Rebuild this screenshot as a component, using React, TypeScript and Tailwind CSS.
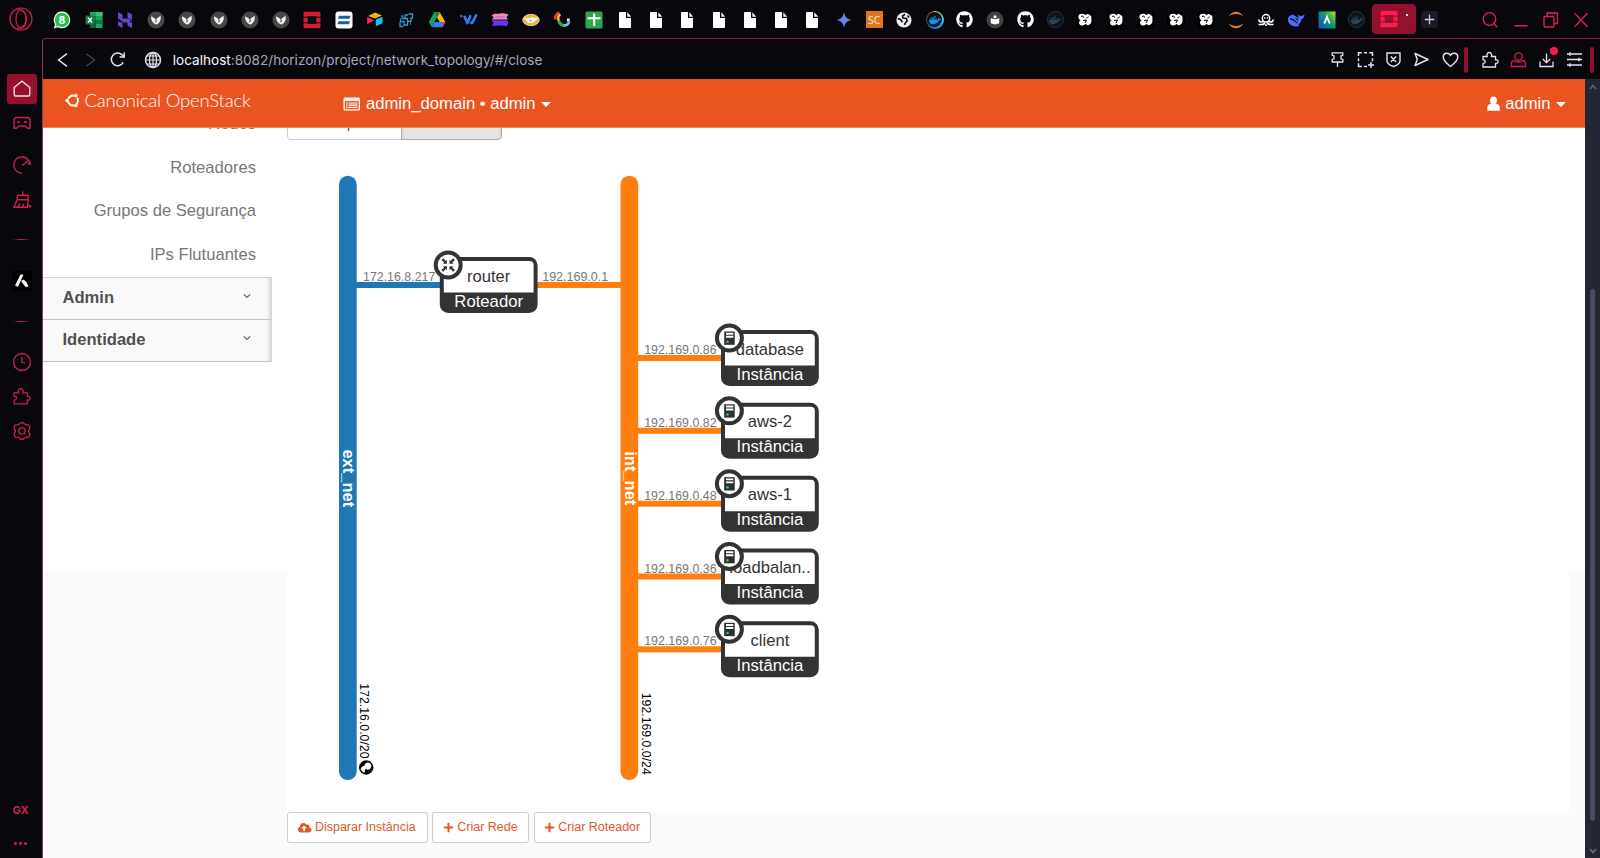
import type { ReactNode } from "react";
import { FaDocker, FaGithub, FaCloudUploadAlt, FaPlus } from "react-icons/fa";

const ARIAL = "font-['Liberation_Sans',Arial,sans-serif]";

function Svg({ size = 18, box = 18, children, className = "" }: { size?: number; box?: number; children: ReactNode; className?: string }) {
  return (
    <svg width={size} height={size} viewBox={`0 0 ${box} ${box}`} fill="none" className={`shrink-0 ${className}`}>
      {children}
    </svg>
  );
}

/* ---------- tab favicons ---------- */

const WhatsApp = () => (
  <Svg>
    <path d="M9 .6a8.3 8.3 0 1 1-3.9 15.700L.8 17.400 2 13.300A8.300 8.300 0 0 1 9 .6Z" fill="#fff" />
    <circle cx="9" cy="8.900" r="7.200" fill="#1fc34e" />
    <path d="m2.300 15.900.9-3 2 2Z" fill="#1fc34e" />
    <text x="9" y="12.800" textAnchor="middle" fontSize="10.500" fontWeight="700" fill="#fff" fontFamily="Inter, sans-serif">8</text>
  </Svg>
);
const Excel = () => (
  <Svg>
    <rect x="5" y="1" width="12.500" height="16" rx="1" fill="#21a366" />
    <path d="M5 5h6v4H5Z" fill="#107c41" />
    <path d="M11 9h6.500v4H11Z" fill="#107c41" />
    <path d="M5 9h6v8H6a1 1 0 0 1-1-1Z" fill="#185c37" />
    <path d="M11 1h5.500a1 1 0 0 1 1 1v3H11Z" fill="#33c481" />
    <rect x=".5" y="4.500" width="9" height="9" rx="1" fill="#107c41" />
    <path d="m3 6.800 4 4.600M7 6.800l-4 4.600" stroke="#fff" strokeWidth="1.500" />
  </Svg>
);
const Hostinger = () => (
  <Svg>
    <path d="M2 1l4.500 2.500v4H13l3 2.500H6L2 7.600ZM11.500 1 16 3.500v5.200L11.500 6.600ZM2 10.200 6.500 12v5L2 14.500ZM5 9.400h7l4 2.600v5l-4.500-2.500v-3H7Z" fill="#6747c7" />
  </Svg>
);
const Wolf = () => (
  <Svg>
    <circle cx="9" cy="9" r="8.500" fill="#484848" />
    <path d="M4 5.500c1.500.3 3 1.200 4.500 3L13.500 4.800c.8 3 0 6.200-3.500 8.700C6.400 13 4 9.800 4 5.500Z" fill="#f1f1f1" />
    <path d="m8 6 .8 3.500-1.300 2.200 2.500-1.500-1-3Z" fill="#484848" />
  </Svg>
);
const OpenStack = ({ color = "#da1a32" }: { color?: string }) => (
  <Svg>
    <path d="M.5 5.800V2.500a1.700 1.700 0 0 1 1.700-1.700h13.600a1.700 1.700 0 0 1 1.700 1.700v3.300h-4.200V5H4.700v.8ZM.5 12.200v3.300a1.700 1.700 0 0 0 1.700 1.700h13.600a1.700 1.700 0 0 0 1.700-1.700v-3.300h-4.200v.8H4.700v-.8ZM.5 6.800h4.200v4.400H.5ZM13.300 6.800h4.200v4.400h-4.200Z" fill={color} />
  </Svg>
);
const Lines = () => (
  <Svg>
    <rect x=".5" y=".5" width="17" height="17" rx="3" fill="#fff" />
    <path d="M4 4.700h11.500l-1 3H3ZM3.500 10.300H15l-1 3H2.500Z" fill="#1560a8" />
  </Svg>
);
const Airtable = () => (
  <Svg>
    <path d="m2 5 6.700-3.200a1 1 0 0 1 .8 0L16 4.600 9.300 7.500Z" fill="#fcb400" />
    <path d="m9.800 8.600 6.700-2.900v6.500l-6.700 3Z" fill="#18bfff" />
    <path d="M1.200 6 8 9.200l-6.800 4Z" fill="#f82b60" />
  </Svg>
);
const Circuit = () => (
  <Svg>
    <path d="M5 7.500h3V4h3M8 7.500h2.500v3H14V7h1.500V3h-4M10.500 10.500v3.500H7v-3.500H3.500v-3M3 11v4.500h3.500M14 13h-1M5 7.500V5h1.500" stroke="#3198cc" strokeWidth="1.300" />
  </Svg>
);
const Drive = () => (
  <Svg>
    <path d="M6 1.500h5.800L6.500 10.800 3.700 16 .8 11Z" fill="#11a35a" />
    <path d="M6.100 1.500h5.800L17.300 11h-5.700Z" fill="#fbbc05" />
    <path d="M6.300 11h11l-2.800 5.200H3.700Z" fill="#3b7ded" />
    <path d="m14 11 3.300 0-2.800 5.200Z" fill="#ea4335" />
    <path d="m6.100 1.500 3 5.200 2.800-5.200Z" fill="#0b8043" />
  </Svg>
);
const Workspace = () => (
  <Svg>
    <path d="m4.600 5.800 2.800 6.200 2.800-6.800M11 11.800l1.200.2 3.800-7.500" stroke="#2f7bf0" strokeWidth="2.700" strokeLinecap="round" strokeLinejoin="round" />
    <circle cx="1.200" cy="5" r="1.300" fill="#2f7bf0" />
  </Svg>
);
const Clouds = () => (
  <Svg>
    <path d="M.5 5C3 1.500 6 3.300 9 2.500s5 0 8.500 1l-2 2.700 1.500 2.300H1L3 6Z" fill="#f08cc0" />
    <path d="M.5 9.300h15l2 2-1.500 3.700-7-.5-8 .5L2.500 12Z" fill="#6a35f2" />
    <path d="M4 6h10" stroke="#b54da0" strokeWidth=".8" />
  </Svg>
);
const Handshake = () => (
  <Svg>
    <ellipse cx="9" cy="9" rx="8.300" ry="5.700" fill="#e3ba3b" stroke="#f3e3a5" strokeWidth=".8" />
    <path d="m2 7 5 .5 3-1 6 .5-2 2.500-4 2.500-4-.6Z" fill="#fff" />
    <path d="m7 9 3 1.200" stroke="#7a6a4a" strokeWidth=".8" />
  </Svg>
);
const Multi = () => (
  <Svg>
    <path d="M6.500 2C3 2.500 1.800 5.500 2.500 8.500" stroke="#e8384f" strokeWidth="2.800" />
    <path d="M7.500 3.500C5 4.500 4.500 7.500 6 10" stroke="#fcbf2d" strokeWidth="2.500" />
    <path d="M5.500 10c1.500 3 3.500 4.800 6.500 4.500" stroke="#37a862" strokeWidth="3" />
    <path d="M11 14.500c2.500 0 4.800-1.500 5-4" stroke="#61c9e8" strokeWidth="2.800" />
    <path d="M15.300 7.500v3" stroke="#d9edf5" strokeWidth="2.800" />
  </Svg>
);
const Sheets = () => (
  <Svg>
    <rect x=".5" y=".5" width="17" height="17" rx="1.500" fill="#2fa750" />
    <path d="M9.200 2.500v12.500M2.500 7.200h13" stroke="#fff" strokeWidth="2" />
  </Svg>
);
const FileTab = () => (
  <Svg>
    <path d="M4 1h6v6h5V16a1 1 0 0 1-1 1H4a1 1 0 0 1-1-1V2a1 1 0 0 1 1-1Z" fill="#fff" />
    <path d="m11.300 1.300 3.900 4.400h-3.900Z" fill="#fff" />
  </Svg>
);
const Gemini = () => (
  <Svg>
    <defs>
      <linearGradient id="gem" x1="2" y1="14" x2="15" y2="3" gradientUnits="userSpaceOnUse">
        <stop stopColor="#3d8bee" />
        <stop offset="1" stopColor="#8a7bd8" />
      </linearGradient>
    </defs>
    <path d="M9 1c.8 5 3 7.300 7.800 8C12 9.800 9.800 12 9 17 8.200 12 6 9.800 1.200 9 6 8.300 8.200 6 9 1Z" fill="url(#gem)" />
  </Svg>
);
const Sc = () => (
  <div className="flex h-[17px] w-[17px] items-center justify-center bg-[#e0761c] font-['Noto_Sans',sans-serif] text-[10.500px] leading-none text-[#fbe9d8]">SC</div>
);
const GlobeTab = () => (
  <Svg>
    <circle cx="9" cy="9" r="7.600" fill="#eceef1" />
    <path d="M10 3.300 7.500 5l.5 2 3.500.5.500 2.500-2 2.500-.5 1.500M2.800 7.500l2.700 1 2 2.700M12.500 4.500l1.500 2" stroke="#15161c" strokeWidth="1.700" />
  </Svg>
);
const DockerRing = () => (
  <span className="flex h-[18px] w-[18px] items-center justify-center rounded-full bg-[conic-gradient(#f4b740,#2ac3de_25%,#2480d8_55%,#223a7a_70%,#e0405a_85%,#f4b740)] p-[1.500px]">
    <span className="flex h-full w-full items-center justify-center rounded-full bg-[#0a1420] text-[#1592e6]">
      <FaDocker size={12} />
    </span>
  </span>
);
const DockerDim = () => (
  <span className="flex h-[17px] w-[17px] items-center justify-center rounded-full border border-[#263743] bg-[#0c151c] text-[#2c4656]">
    <FaDocker size={12} />
  </span>
);
const Github = () => <FaGithub size={17} color="#fff" />;
const Reader = () => (
  <Svg>
    <circle cx="9" cy="9" r="8.500" fill="#424242" />
    <circle cx="9" cy="5.700" r="1.500" fill="#fff" />
    <path d="m4.800 7.200 4.200 1 4.200-1v5L9 13.500l-4.200-1.300Z" fill="#fff" />
  </Svg>
);
const Knot = () => (
  <Svg>
    <rect width="18" height="18" rx="4" fill="#000" />
    <path d="M3 3.800c2.500-1.600 5.500-1 6.200.5C11 2.500 13 2.500 13.300 4c2 .3 2.700 2.500 2 4 .8 3-.8 6-3.600 6.200L9.500 13c-1.500 2-5.500 2-6.300-.6-.5-1.700.3-2.600 1.600-2.900C2.500 8.500 1.800 5.800 3 3.800Z" fill="#fff" />
    <path d="M5 5.500c1.500-.8 2.800-.3 2.500 1M10.500 7c1 0 1.600-.5 1.800-1.500M7 9.500l3.500-.5-1.500 3" stroke="#000" strokeWidth="1" />
  </Svg>
);
const Jupyter = () => (
  <Svg>
    <path d="M1.500 5.500C5-.8 13-.8 16.500 5.500 12 2.300 6 2.300 1.500 5.500ZM1.500 12.500c3.500 6.300 11.500 6.300 15 0-4.500 3.200-10.500 3.200-15 0Z" fill="#e67a22" />
  </Svg>
);
const Octo = () => (
  <Svg>
    <circle cx="9" cy="7.300" r="3.700" stroke="#fff" strokeWidth="1.500" />
    <path d="M7 7h1.300M9.700 7H11" stroke="#fff" strokeWidth="1.400" />
    <path d="M2.200 8.500c-.8 2.500 2.300 2.800 4.300 2M15.800 8.500c.8 2.500-2.300 2.800-4.300 2M1.500 13.500h3c2 0 3-.8 3.300-2M16.500 13.500h-3c-2 0-3-.8-3.300-2M8 14h2" stroke="#fff" strokeWidth="1.700" />
  </Svg>
);
const Deepseek = () => (
  <Svg>
    <path d="M.8 8C1.500 4.500 4.500 3.500 6.500 3.800l5 3.500c0-1.500-.8-2.500 0-4 .5 1.500 2 2.200 3.200 1.800L17.500 3.500c-.3 3-1.300 4.200-3 4.800-.3 2.500-1.500 4-3 5.200l1 1.300C7 16.500.8 14.500.8 8Z" fill="#4d6bfe" />
    <path d="M3 8c3-.8 5.500 3 7.500 4.200M8.500 7.500c1.500.2 2.200 1 2.300 2" stroke="#08070c" strokeWidth="1.200" />
  </Svg>
);
const Auth = () => (
  <Svg>
    <defs>
      <linearGradient id="auth" x1="0" y1="16" x2="18" y2="1" gradientUnits="userSpaceOnUse">
        <stop stopColor="#114fc4" />
        <stop offset=".55" stopColor="#0e9a74" />
        <stop offset="1" stopColor="#c3e61c" />
      </linearGradient>
    </defs>
    <rect x=".5" y=".5" width="17" height="17" fill="url(#auth)" />
    <path d="M6.300 12.500 9 5.800l2.700 6.700" stroke="#fff" strokeWidth="1.900" />
  </Svg>
);

const tabsA = [WhatsApp, Excel, Hostinger, Wolf, Wolf, Wolf, Wolf, Wolf, OpenStack, Lines, Airtable, Circuit, Drive, Workspace, Clouds, Handshake, Multi, Sheets, FileTab, FileTab, FileTab, FileTab, FileTab, FileTab, FileTab, Gemini];
const tabsB = [Sc, GlobeTab, DockerRing, Github, Reader, Github, DockerDim, Knot, Knot, Knot, Knot, Knot, Jupyter, Octo, Deepseek, Auth, DockerDim];

function TabStrip() {
  return (
    <div className="flex h-[38px] items-center pl-[4.700px] pt-[1.500px]">
      {tabsA.map((Icon, i) => (
        <div key={i} className="flex w-[31.260px] shrink-0 justify-center"><Icon /></div>
      ))}
      {tabsB.map((Icon, i) => (
        <div key={i} className="flex w-[30.170px] shrink-0 justify-center"><Icon /></div>
      ))}
      <div className="-mt-px flex h-[30px] w-[44.500px] shrink-0 items-center rounded-[4px] bg-[#93112f] pl-[8px]">
        <OpenStack color="#fa1e4e" />
        <span className="-mt-[9px] ml-[8.500px] h-[1.500px] w-[1.500px] bg-[#f3d7de]" />
      </div>
      <div className="ml-[5px] flex h-[17px] w-[17px] shrink-0 items-center justify-center rounded-[3px] bg-[#1c1a28]">
        <Svg size={11} box={11}><path d="M5.500.800v9.400M.800 5.500h9.400" stroke="#cfcbe0" strokeWidth="1.300" /></Svg>
      </div>
      <div className="ml-[36px] flex items-center text-[#e0234e]">
        <div className="flex w-[31px] justify-center">
          <Svg><circle cx="8.500" cy="8" r="6.300" stroke="currentColor" strokeWidth="1.300" /><path d="m13 12.600 3.300 3.600" stroke="currentColor" strokeWidth="1.300" /></Svg>
        </div>
        <div className="flex w-[31px] justify-center">
          <Svg><path d="M2.500 14.800h13" stroke="currentColor" strokeWidth="1.500" /></Svg>
        </div>
        <div className="flex w-[30px] justify-center">
          <Svg><rect x="2" y="5.500" width="10" height="10.500" rx="1" stroke="currentColor" strokeWidth="1.300" /><path d="M5.200 5.500V2h10.300v10.500H12" stroke="currentColor" strokeWidth="1.300" /></Svg>
        </div>
        <div className="flex w-[30px] justify-center">
          <Svg><path d="m2.500 2.200 13 13.500M15.500 2.200l-13 13.500" stroke="currentColor" strokeWidth="1.300" /></Svg>
        </div>
      </div>
    </div>
  );
}

/* ---------- address bar ---------- */

const puzzlePath = "M2 5.500h4.200C5.300 3 6.800 1.500 8.300 1.500S11.300 3 10.500 5.500h4v3.300c3.500-.6 3.500 4.200 0 3.700v3.500H2v-3.300c3-.8 3-3.600 0-4Z";

function AddressBar() {
  const cell = "flex w-[28.200px] shrink-0 justify-center";
  return (
    <div className="flex h-[40px] items-center pt-[1.500px] text-[#e4e2ec]">
      <div className="ml-[12px] flex w-[16px] justify-center"><Svg size={16} box={16}><path d="M12 1.700 3.600 8l8.400 6.300" stroke="currentColor" strokeWidth="1.500" /></Svg></div>
      <div className="ml-[11px] flex w-[16px] justify-center text-[#45434f]"><Svg size={16} box={16}><path d="M4.200 1.700 12.600 8l-8.400 6.300" stroke="currentColor" strokeWidth="1.300" /></Svg></div>
      <div className="ml-[10.500px] flex w-[18px] justify-center">
        <Svg size={17} box={17}><path d="M14.200 11.300A6.300 6.300 0 1 1 13 3.800l2 2M15.200 1.500v4.400h-4.600" stroke="currentColor" strokeWidth="1.500" /></Svg>
      </div>
      <div className="ml-[17.300px] flex w-[18px] justify-center">
        <Svg size={18}><circle cx="9" cy="9" r="7.500" stroke="currentColor" strokeWidth="1.500" /><ellipse cx="9" cy="9" rx="3.500" ry="7.500" stroke="currentColor" strokeWidth="1.300" /><path d="M1.500 9h15M2.800 5h12.400M2.800 13h12.400M9 1.500v15" stroke="currentColor" strokeWidth="1.200" /></Svg>
      </div>
      <div className="ml-[11px] mt-px grow whitespace-nowrap font-['Inter',sans-serif] text-[13.570px] text-[#aaa5b8]">
        <span className="text-[#fbfaff]">localhost</span>:8082/horizon/project/network_topology/#/close
      </div>
      <div className={cell}><Svg size={17} box={17}><path d="M3.200 1.800h10.600v2.500l-1.800.5v3l1.800.700v2.500H3.200V8.500L5 7.800v-3l-1.800-.5ZM8.500 11v5" stroke="currentColor" strokeWidth="1.300" /></Svg></div>
      <div className={cell}><Svg size={17} box={17}><path d="M1.500 5V1.700h3.300M7 1.700h3M12.200 1.700h3.300V5M15.500 7.200v3M1.500 7.200v3M1.500 12.200v3.300h3.300M7 15.500h3M11 14h6M14 11v6" stroke="currentColor" strokeWidth="1.500" /></Svg></div>
      <div className={cell}><Svg size={17} box={17}><path d="M2 2h13v8.500c-1 2.500-3.500 4-6.500 5-3-1-5.500-2.500-6.500-5ZM5.800 5.500l5.400 5.400M11.200 5.500l-5.400 5.400" stroke="currentColor" strokeWidth="1.400" /></Svg></div>
      <div className={cell}><Svg size={17} box={17}><path d="m2 2.500 13 6-13 6 2.300-6Z" stroke="currentColor" strokeWidth="1.400" strokeLinejoin="round" /></Svg></div>
      <div className={cell}><Svg size={17} box={17}><path d="M8.500 15.500C4 12 1.200 9.500 1.200 6c0-4.300 5.300-5 7.300-1.700C10.500 1 15.800 1.700 15.800 6c0 3.500-2.800 6-7.300 9.500Z" stroke="currentColor" strokeWidth="1.400" /></Svg></div>
      <div className="h-[26px] w-[4px] shrink-0 rounded-sm bg-[#8f1130]" />
      <div className={`${cell} ml-[8px]`}><Svg size={18}><path d={puzzlePath} stroke="currentColor" strokeWidth="1.300" /></Svg></div>
      <div className={`${cell} text-[#d71f49]`}><Svg size={17} box={17}><circle cx="8.500" cy="5.500" r="3.700" stroke="currentColor" strokeWidth="1.300" /><path d="M5 9.700H3.300L1.500 11.500v4h14v-4l-1.800-1.800H12q-3.500 2.600-7 0" stroke="currentColor" strokeWidth="1.300" /></Svg></div>
      <div className={`${cell} relative`}>
        <Svg size={17} box={17}><path d="M8.500 2.500v9M4.800 8l3.700 3.700L12.200 8M2 10.500v5h13v-5" stroke="currentColor" strokeWidth="1.300" /></Svg>
        <span className="absolute -top-[4px] right-[2.500px] h-[8px] w-[8px] rounded-full bg-[#fa1e4e]" />
      </div>
      <div className={cell}><Svg size={17} box={17}><path d="M1 3h15M1 8.500h15M1 14h15M4 1.200v3.600M13 6.700v3.600M4 12.200v3.600" stroke="currentColor" strokeWidth="1.400" /></Svg></div>
      <div className="ml-[1px] h-[26px] w-[4px] shrink-0 rounded-sm bg-[#8f1130]" />
      <div className="w-[6px] shrink-0" />
    </div>
  );
}

/* ---------- browser side rail ---------- */

function Rail() {
  const cell = "flex shrink-0 items-center justify-center";
  return (
    <aside className="flex w-[42px] shrink-0 flex-col pl-px text-[#cf2149]">
      <div className={`${cell} h-[38px] pr-px`}>
        <Svg size={24} box={24}><circle cx="12" cy="12" r="11" stroke="currentColor" strokeWidth="1.200" /><ellipse cx="12" cy="12" rx="5" ry="9.500" stroke="currentColor" strokeWidth="1.200" /><path d="M8 2.500c7.500 1 9.500 5 9.500 9.500s-2 8.500-9.500 9.500" stroke="currentColor" strokeWidth="1.200" /></Svg>
      </div>
      <div className="mx-auto mt-[35.500px] flex h-[30px] w-[30px] shrink-0 items-center justify-center rounded-[3px] bg-[#93112f] text-[#fbd9e1]">
        <Svg size={20} box={20}><path d="M2.200 8.500 10 2.200l7.800 6.300v7a1.500 1.500 0 0 1-1.500 1.500H3.700a1.500 1.500 0 0 1-1.500-1.500Z" stroke="currentColor" strokeWidth="1.400" /></Svg>
      </div>
      <div className={`${cell} h-[38px]`}>
        <Svg size={20} box={20}><path d="M4 4.500h12l2 2v8.800h-2.500l-2.500-2.300H7l-2.500 2.300H2V6.500Z" stroke="currentColor" strokeWidth="1.400" strokeLinejoin="round" /><circle cx="6.500" cy="9" r="1.300" fill="currentColor" /><circle cx="13.500" cy="9" r="1.300" fill="currentColor" /></Svg>
      </div>
      <div className={`${cell} h-[47px]`}>
        <Svg size={20} box={20}><path d="M10 18.300a8.300 8.300 0 1 1 8.300-8M10 10.500 16 5.800M15.500 8.500h2.500" stroke="currentColor" strokeWidth="1.400" /></Svg>
      </div>
      <div className={`${cell} h-[23px]`}>
        <Svg size={20} box={20}><path d="M10.800 1.500v4M5.500 5.300h10.700v4.500H5ZM5 9.800l-3 7.500h13.500l.700-7.500M5.800 17.200l2-3.500M10.500 17.200l1-3.500" stroke="currentColor" strokeWidth="1.400" /><circle cx="18" cy="16.300" r="1.300" fill="currentColor" /></Svg>
      </div>
      <div className={`${cell} h-[55px]`}><span className="h-px w-[19px] bg-gradient-to-r from-transparent via-[#cf2149] to-transparent" /></div>
      <div className={`${cell} h-[29px]`}>
        <Svg size={20} box={20}><rect width="20" height="20" rx="3" fill="#000" /><path d="M8.500 3.500h3L6 16l-3-1.500ZM9 10l2.500-1.500 3 2.500 2 4.500-3 .5Z" fill="#f2f2f2" /></Svg>
      </div>
      <div className={`${cell} h-[51px]`}><span className="h-px w-[19px] bg-gradient-to-r from-transparent via-[#cf2149] to-transparent" /></div>
      <div className={`${cell} h-[30px]`}>
        <Svg size={20} box={20}><circle cx="10" cy="10" r="8.500" stroke="currentColor" strokeWidth="1.300" /><path d="M9.800 5v5.300l3.200.5" stroke="currentColor" strokeWidth="1.300" /></Svg>
      </div>
      <div className={`${cell} h-[39px]`}><Svg size={19}><path d={puzzlePath} stroke="currentColor" strokeWidth="1.200" /></Svg></div>
      <div className={`${cell} h-[30px]`}>
        <Svg size={20} box={20}><path d="M7.700 2.800Q10 .2 12.300 2.800L14 3.600q3.900-.2 3.800 3.300L16.500 10l1.300 3.100q.1 3.500-3.800 3.300l-1.700.8q-2.300 2.600-4.600 0L6 16.400q-3.900.2-3.800-3.300L3.500 10 2.200 6.900Q2.100 3.400 6 3.600Z" stroke="currentColor" strokeWidth="1.300" /><circle cx="10" cy="10" r="3.200" stroke="currentColor" strokeWidth="1.300" /></Svg>
      </div>
      <div className="mt-auto flex h-[20px] shrink-0 items-center justify-center pr-[2px] font-['Inter',sans-serif] text-[11px] font-bold">GX</div>
      <div className="mb-px mt-[9px] flex h-[28px] shrink-0 items-center justify-center gap-[2.300px] pr-[2px]">
        <span className="h-[3px] w-[3px] rounded-full bg-current" />
        <span className="h-[3px] w-[3px] rounded-full bg-current" />
        <span className="h-[3px] w-[3px] rounded-full bg-current" />
      </div>
    </aside>
  );
}

/* ---------- Horizon dashboard ---------- */

const Caret = () => <span className="mt-px h-0 w-0 border-x-[5px] border-t-[5.500px] border-x-transparent border-t-white" />;

function Header() {
  return (
    <header className="relative z-10 flex h-[48.500px] shrink-0 items-center border-b border-[#f0845c] bg-[#e95420] text-[16.650px] text-white">
      <div className="ml-[22px] mb-[5px] flex w-[278.500px] items-center">
        <Svg size={15} box={16}>
          <circle cx="8.500" cy="8" r="5.300" stroke="#fff" strokeWidth="2" strokeDasharray="8.100 3" strokeDashoffset="-1.500" transform="rotate(60 8.500 8)" />
          <circle cx="2.300" cy="8" r="1.900" fill="#fff" />
          <circle cx="11.600" cy="2.600" r="1.900" fill="#fff" />
          <circle cx="11.600" cy="13.400" r="1.900" fill="#fff" />
        </Svg>
        <span className="ml-[5px] whitespace-nowrap font-['Lato',sans-serif] text-[18.500px] font-light leading-none tracking-[-0.180px]">Canonical OpenStack</span>
      </div>
      <div className="flex items-center pt-[2.500px]">
        <Svg size={18}>
          <path fillRule="evenodd" d="M2 2.500h13.500a1.500 1.500 0 0 1 1.500 1.500v10a1.500 1.500 0 0 1-1.500 1.500H2A1.500 1.500 0 0 1 .500 14V4A1.500 1.500 0 0 1 2 2.500ZM1.800 6v8.200h13.900V6Z" fill="#fff" />
          <path d="M3 8h1.500M5.500 8h9M3 10.200h1.500M5.500 10.200h9M3 12.400h1.500M5.500 12.400h9" stroke="#fff" strokeWidth="1.200" />
        </Svg>
        <span className="ml-[5px] mr-[5px] whitespace-nowrap">admin_domain • admin</span>
        <Caret />
      </div>
      <div className="ml-auto mr-[19.500px] flex items-center pt-[2.500px]">
        <Svg size={15} box={15}>
          <ellipse cx="7.500" cy="4.500" rx="3.400" ry="4" fill="#fff" />
          <path d="M1.300 14.800v-3.500c0-2 1.700-3.300 3.700-3.500h5c2 .2 3.700 1.500 3.700 3.500v3.500Z" fill="#fff" />
        </Svg>
        <span className="ml-[4px] mr-[5px]">admin</span>
        <Caret />
      </div>
    </header>
  );
}

function Panel({ label }: { label: string }) {
  return (
    <div className="flex h-[42px] items-center justify-between border-b border-[#c6c6c6] bg-[#f9f9f9] pl-[20px] pr-[19.500px] font-bold text-[#515151] shadow-[inset_-4px_0_4px_-3px_rgba(0,0,0,0.200)]">
      {label}
      <Svg size={8} box={8} className="mb-[4px]"><path d="M.8 2.300 4 5.500l3.200-3.200" stroke="#666" strokeWidth="1.200" /></Svg>
    </div>
  );
}

function SideNav() {
  return (
    <nav className="w-[229px] shrink-0 text-[16.600px]">
      <div className="-mt-[25px] pr-[15.500px] text-right text-[#777]">
        {["Redes", "Roteadores", "Grupos de Segurança", "IPs Flutuantes"].map((item) => (
          <div key={item} className="flex h-[43.500px] items-center justify-end pt-px">{item}</div>
        ))}
      </div>
      <div className="border-r border-t border-r-[#d8d8d8] border-t-[#d2d2d2]">
        <Panel label="Admin" />
        <Panel label="Identidade" />
      </div>
    </nav>
  );
}

const instances = [
  { name: "database", ip: "192.169.0.86", y: 355 },
  { name: "aws-2", ip: "192.169.0.82", y: 427.8 },
  { name: "aws-1", ip: "192.169.0.48", y: 500.7 },
  { name: "loadbalan..", ip: "192.169.0.36", y: 573.5 },
  { name: "client", ip: "192.169.0.76", y: 646.3 },
];

/* Device card; the origin is the top-left corner of its box. */
function Device({ x, y, name, kind, children }: { x: number; y: number; name: string; kind: string; children: ReactNode }) {
  return (
    <g transform={`translate(${x} ${y})`}>
      <rect width="97.800" height="56" rx="8.500" fill="#333" />
      <path d="M4 35.500V8a4 4 0 0 1 4-4h81.800a4 4 0 0 1 4 4v27.500Z" fill="#fff" />
      <text x="48.900" y="24.600" textAnchor="middle" fontSize="16.600" fill="#333">{name}</text>
      <text x="48.900" y="49.600" textAnchor="middle" fontSize="16.700" fill="#fff">{kind}</text>
      <circle cx="8.400" cy="8" r="12.500" fill="#fff" stroke="#333" strokeWidth="4" />
      {children}
    </g>
  );
}

function Topology() {
  return (
    <svg width="1282" height="655" viewBox="287 157 1282 655" className="block font-['Liberation_Sans',Arial,sans-serif]">
      <rect x="339" y="175.700" width="17.700" height="604.300" rx="8.850" fill="#1f77b4" />
      <rect x="620.500" y="175.700" width="17.700" height="604.300" rx="8.850" fill="#ff7f0e" />
      <text transform="translate(343.300 478.300) rotate(90)" textAnchor="middle" fontSize="16.500" fontWeight="700" fill="#fff">ext_net</text>
      <text transform="translate(624.800 478.300) rotate(90)" textAnchor="middle" fontSize="16.500" fontWeight="700" fill="#fff">int_net</text>
      <text transform="translate(360.300 758.500) rotate(90)" textAnchor="end" fontSize="12.300" fill="#000">172.16.0.0/20</text>
      <text transform="translate(642 774.800) rotate(90)" textAnchor="end" fontSize="12.300" fill="#000">192.169.0.0/24</text>
      <circle cx="366.200" cy="767.500" r="7.200" fill="#000" />
      <path d="m360.500 769 1.800-2.500 2.200-.8.300-1.800 2.500-1.500 2.800.6 1.400 2.500-.7 2.500-1.500 1.500-2.300.2-1-1.200-1.500 2.500 1 1.500-2.500-.3Z" fill="#fff" />

      <rect x="356" y="282" width="86" height="6" fill="#1f77b4" />
      <rect x="535" y="282" width="87" height="6" fill="#ff7f0e" />
      <text x="363" y="281" fontSize="12.400" fill="#777">172.16.8.217</text>
      <text x="542.200" y="281" fontSize="12.500" fill="#777">192.169.0.1</text>
      <Device x={439.8} y={257} name="router" kind="Roteador">
        <g transform="translate(8.400 8)" fill="#333">
          {[0, 90, 180, 270].map((a) => (
            <path key={a} transform={`rotate(${a})`} d="M1.300-1.300V-5.300L2.500-4.100 5-6.800 6.800-5 4.100-2.500 5.300-1.300Z" />
          ))}
        </g>
      </Device>

      {instances.map((d) => (
        <g key={d.name}>
          <rect x="637" y={d.y} width="86" height="6" fill="#ff7f0e" />
          <text x="644.200" y={d.y - 1} fontSize="12.400" fill="#777">{d.ip}</text>
          <Device x={721} y={d.y - 25} name={d.name} kind="Instância">
            <rect x="3.200" y="1.500" width="10.500" height="13.300" fill="#2b2f2d" />
            <path d="M5 3.700h7.300M5 6.700h7.300" stroke="#fff" strokeWidth="1.900" />
            <circle cx="6.500" cy="11.700" r="1.300" fill="#4cba6a" />
          </Device>
        </g>
      ))}
    </svg>
  );
}

function ActionButton({ icon, label, width }: { icon: ReactNode; label: string; width: string }) {
  return (
    <button className={`flex h-[30.500px] items-center justify-center gap-[3px] whitespace-nowrap rounded-[3px] border border-[#ccc] bg-white text-[12.500px] text-[#dd5a2c] ${width}`}>
      {icon}
      {label}
    </button>
  );
}

function Content() {
  return (
    <main className="ml-[15px] w-[1282px] shrink-0">
      <div className="-mt-[18px] flex h-[30.500px] text-[12.400px] text-[#333]">
        <div className="flex w-[115.500px] items-center justify-center rounded-l-[4px] border border-[#ccc] bg-white pl-[17px]">Pequeno</div>
        <div className="-ml-px flex w-[101px] items-center justify-center rounded-r-[4px] border border-[#adadad] bg-[#e6e6e6] shadow-[inset_0_3px_5px_rgba(0,0,0,0.125)]">Normal</div>
      </div>
      <div className="mt-[17.300px] bg-white"><Topology /></div>
      <div className="mt-[0.200px] flex gap-[4.500px]">
        <ActionButton icon={<FaCloudUploadAlt size={13.5} />} label="Disparar Instância" width="w-[141px]" />
        <ActionButton icon={<FaPlus size={11} />} label="Criar Rede" width="w-[97px]" />
        <ActionButton icon={<FaPlus size={11} />} label="Criar Roteador" width="w-[117.500px]" />
      </div>
    </main>
  );
}

function ScrollBar() {
  return (
    <div className="flex w-[15px] shrink-0 flex-col items-center bg-[#232733]">
      <Svg size={8} box={8} className="mt-[4px]"><path d="m1 6 3-3.500L7 6" stroke="#5b5f6b" strokeWidth="1.700" /></Svg>
      <span className="mt-[198px] h-[532px] w-[5px] rounded-full bg-[#474c61]" />
      <Svg size={8} box={8} className="mb-[3px] mt-auto"><path d="m1 2 3 3.500L7 2" stroke="#6b6f7b" strokeWidth="1.700" /></Svg>
    </div>
  );
}

export default function App() {
  return (
    <div className={`flex h-[858px] w-[1600px] overflow-hidden bg-[#08070c] ${ARIAL}`}>
      <Rail />
      <div className="flex min-w-0 grow flex-col">
        <TabStrip />
        <div className="flex min-h-0 grow flex-col rounded-tl-[4px] border-l border-t border-l-[#7c4257] border-t-[#8b1a37]">
          <AddressBar />
          <div className="flex min-h-0 grow">
            <div className="-ml-[0.500px] flex min-w-0 grow flex-col overflow-hidden bg-[linear-gradient(#fff_492px,#fafafa_492px)]">
              <Header />
              <div className="flex min-h-0 grow">
                <SideNav />
                <Content />
              </div>
            </div>
            <ScrollBar />
          </div>
        </div>
      </div>
    </div>
  );
}
